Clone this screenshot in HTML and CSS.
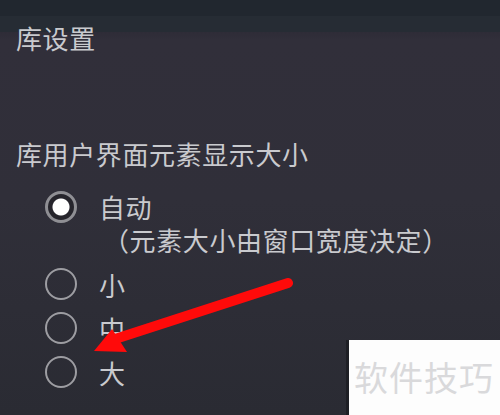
FILE: index.html
```html
<!DOCTYPE html>
<html lang="zh-CN">
<head>
  <meta charset="UTF-8" />
  <meta name="viewport" content="width=device-width, initial-scale=1.0"/>
  <title>库设置</title>
  <link rel="stylesheet" href="styles.css">
</head>
<body>

  <div class="screen">
    <h1 class="title">库设置</h1>

    <div class="section">
      <div class="section-label">库用户界面元素显示大小</div>

      <!-- Size options -->
      <div class="options">
        <div class="option option-auto">
          <span class="radio checked"></span>
          <div class="option-text">
            <div>自动</div>
            <div class="option-note">（元素大小由窗口宽度决定）</div>
          </div>
        </div>
        <div class="option">
          <span class="radio"></span>
          <div class="option-text">小</div>
        </div>
        <div class="option">
          <span class="radio"></span>
          <div class="option-text">中</div>
        </div>
        <div class="option">
          <span class="radio"></span>
          <div class="option-text">大</div>
        </div>
      </div>
    </div>

    <!-- Annotation arrow -->
    <svg class="arrow" width="500" height="415" viewBox="0 0 500 415">
      <line x1="288" y1="283" x2="112" y2="340" stroke="#ff0a0a" stroke-width="10" stroke-linecap="round"/>
      <polygon points="94,351 112,329 127,352" fill="#ff0a0a"/>
    </svg>

    <div class="watermark">软件技巧</div>
  </div>

</body>
</html>
```

FILE: styles.css
```css
body {
  margin: 0;
  font-family: "Noto Sans CJK SC", "Noto Sans", sans-serif;
  background-color: #2f2e38;
}

.screen {
  position: relative;
  width: 500px;
  height: 415px;
  overflow: hidden;
  background: linear-gradient(to bottom, #21272f 0, #21272f 16px, #262c34 16px, #262c34 32px, #2e2c37 32px, #312f3a 40px, #302f39 200px, #2a2b33 415px);
  color: #c9cace;
  letter-spacing: 0.6px;
}

.title {
  margin: 0;
  padding: 23px 0 0 16px;
  font-size: 26px;
  font-weight: normal;
  line-height: 30px;
}

.section {
  padding: 86px 0 0 16px;
}

.section-label {
  font-size: 26px;
  line-height: 30px;
}

.options {
  margin-top: 21px;
  padding-left: 29px;
}

.option {
  display: flex;
  align-items: center;
  gap: 22px;
  height: 44px;
  font-size: 26px;
}

.option-auto {
  align-items: flex-start;
  height: auto;
  margin-bottom: 6px;
  line-height: 33px;
}

.option-auto .radio {
  margin-top: 1px;
}

.option-note {
  padding-left: 4px;
}

.radio {
  box-sizing: border-box;
  width: 32px;
  height: 32px;
  border: 2px solid #9d9da2;
  border-radius: 50%;
  flex-shrink: 0;
}

.radio.checked {
  border-width: 3px;
  border-color: #8f8f94;
  background: radial-gradient(circle, #ffffff 0, #ffffff 8px, #26252c 9px);
}

.arrow {
  position: absolute;
  left: 0;
  top: 0;
  filter: blur(0.6px);
}

.watermark {
  position: absolute;
  left: 346px;
  top: 340px;
  right: 0;
  bottom: 0;
  padding: 17px 0 0 5px;
  background: #fdfdfd;
  border-left: 3px solid #1e1f25;
  color: #d9d9db;
  font-size: 34px;
  line-height: 40px;
  letter-spacing: 1px;
}
```
